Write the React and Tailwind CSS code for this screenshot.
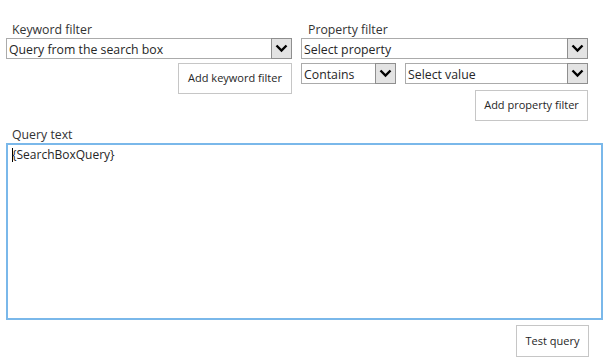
import React from "react";

function Chevron() {
  return (
    <div className="flex h-[21px] w-[21px] -mr-px items-center justify-center border border-[#8f8f8f] bg-[#e3e3e3]">
      <svg width="13" height="9" viewBox="0 0 13 9">
        <path d="M1.5 1.5 L6.5 6.5 L11.5 1.5" fill="none" stroke="#000" strokeWidth="2.4" />
      </svg>
    </div>
  );
}

function Select({ text, className = "" }) {
  return (
    <div className={"flex h-[21px] items-center justify-between border border-[#ababab] bg-white pl-[2px] " + className}>
      <span className="pt-[2px] text-[12.3px] leading-[17px] text-[#262626]">{text}</span>
      <Chevron />
    </div>
  );
}

function Btn({ children, className = "" }) {
  return (
    <div className={"flex items-center justify-center border border-[#c6c6c6] bg-white text-[11px] text-[#262626] " + className}>
      {children}
    </div>
  );
}

export default function App() {
  return (
    <div className="h-[362px] w-[605px] bg-white pl-[6px] pt-[21px]" style={{ fontFamily: '"Open Sans", "Noto Sans", sans-serif' }}>
      <div className="flex gap-[9px]">
        <div className="flex w-[286px] flex-col">
          <div className="h-[17px] pl-[6px] text-[12.3px] leading-[17px] text-[#333]">Keyword filter</div>
          <Select text="Query from the search box" />
          <Btn className="ml-auto mt-[4px] h-[31px] w-[114px]">Add keyword filter</Btn>
        </div>
        <div className="flex w-[287px] flex-col">
          <div className="h-[17px] pl-[7px] text-[12.3px] leading-[17px] text-[#333]">Property filter</div>
          <Select text="Select property" />
          <div className="mt-[4px] flex gap-[9px]">
            <Select text="Contains" className="w-[95px]" />
            <Select text="Select value" className="flex-1" />
          </div>
          <Btn className="ml-auto mt-[6px] h-[31px] w-[113px]">Add property filter</Btn>
        </div>
      </div>
      <div className="mt-[5px] h-[17px] pl-[6px] text-[12.3px] leading-[17px] text-[#333]">Query text</div>
      <div className="h-[177px] w-[597px] border-2 border-[#7ab8ea] px-[4px] pt-[2px] text-[12px] leading-[16px] text-[#262626]">
        <div className="flex items-center">
          <span className="mr-[-1px] h-[14px] w-px bg-[#000]" />
          <span>{"{SearchBoxQuery}"}</span>
        </div>
      </div>
      <div className="flex w-[583px] justify-end pt-[5px]">
        <Btn className="h-[32px] w-[73px]">Test query</Btn>
      </div>
    </div>
  );
}
